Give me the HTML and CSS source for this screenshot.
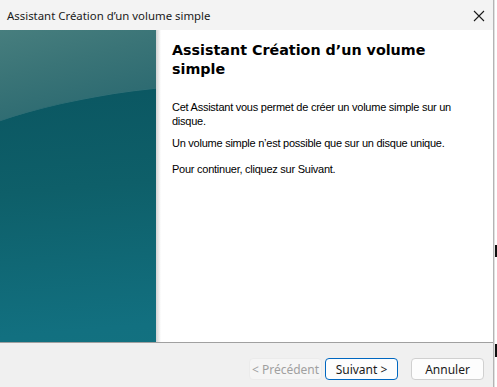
FILE: index.html
```html
<!DOCTYPE html>
<html>
  <head>
    <meta charset="utf-8" />
    <title>Assistant Création d'un volume simple</title>
    <link rel="stylesheet" href="styles.css">
  </head>
  <body>
    <div class="window">
      <div class="titlebar">
        <span class="title">Assistant Création d’un volume simple</span>
        <svg class="close" width="12" height="12" viewBox="0 0 12 12">
          <path d="M1 1 L11 11 M11 1 L1 11" stroke="#1a1a1a" stroke-width="1.1" fill="none" />
        </svg>
      </div>

      <div class="main">
        <div class="side"></div>
        <div class="shade"></div>
        <div class="content">
          <h1>Assistant Création d’un volume simple</h1>
          <p>Cet Assistant vous permet de créer un volume simple sur un disque.</p>
          <p>Un volume simple n’est possible que sur un disque unique.</p>
          <p class="next">Pour continuer, cliquez sur Suivant.</p>
        </div>
      </div>

      <div class="footer">
        <button class="btn disabled">&lt; Précédent</button>
        <button class="btn default">Suivant &gt;</button>
        <button class="btn cancel">Annuler</button>
      </div>
    </div>
    <div class="desk">
      <div class="mark one"></div>
      <div class="mark two"></div>
    </div>
  </body>
</html>
```

FILE: styles.css
```css
* {
  box-sizing: border-box;
  margin: 0;
  padding: 0;
}

body {
  display: flex;
  width: 497px;
  height: 387px;
  overflow: hidden;
  background: #fff;
  font-family: "Liberation Sans", Arial, sans-serif;
}

.window {
  width: 494px;
  height: 387px;
  display: flex;
  flex-direction: column;
  border-right: 1px solid #b4b4b4;
  background: #f0f0f0;
}

.titlebar {
  height: 30px;
  display: flex;
  align-items: center;
  justify-content: space-between;
  padding: 0 8px 0 7px;
  background: #f3f3f3;
}

.title {
  font-family: "Noto Sans", "Liberation Sans", sans-serif;
  font-size: 11.4px;
  color: #1a1a1a;
}

.close {
  margin-top: 1px;
}

.main {
  height: 313px;
  display: flex;
  border-bottom: 1px solid #a0a0a0;
  background: #fff;
}

.side {
  position: relative;
  width: 156px;
  overflow: hidden;
  background: linear-gradient(165deg, #477e7e 0%, #3a7477 14%, #2c6a71 30%, #1f6068 100%);
}

/* darker lower area with the curved top edge */
.side::before {
  content: "";
  position: absolute;
  left: -150px;
  top: 53px;
  width: 800px;
  height: 340px;
  border-radius: 50%;
  border-top: 1px solid #316f76;
  background: linear-gradient(175deg, #0a5560 0%, #0e5f69 30%, #127080 65%, #15767f 100%);
}

.shade {
  width: 5px;
  background: linear-gradient(90deg, #d2d2d2, #fff);
}

.content {
  flex: 1;
  padding: 11px 12px 0 11px;
  color: #000;
}

h1 {
  font-family: "DejaVu Sans", Verdana, sans-serif;
  font-size: 14.3px;
  line-height: 19px;
  font-weight: bold;
  margin-bottom: 21px;
  width: 290px;
}

p {
  font-size: 11px;
  line-height: 14px;
  letter-spacing: -0.25px;
  margin-bottom: 8px;
  width: 300px;
}

p.next {
  margin-top: 12px;
}

.footer {
  flex: 1;
  display: flex;
  justify-content: flex-end;
  align-items: flex-start;
  padding: 15px 9px 0 0;
}

.btn {
  width: 73px;
  height: 22px;
  border: 1px solid #d0d0d0;
  border-radius: 4px;
  background: #fdfdfd;
  font-family: "Noto Sans", "Liberation Sans", sans-serif;
  font-size: 12px;
  color: #1a1a1a;
}

.btn.disabled {
  background: #f5f5f5;
  border-color: #ebebeb;
  color: #a0a0a0;
}

.btn.default {
  margin-left: 3px;
  border-color: #0067c0;
}

.btn.cancel {
  margin-left: 13px;
}

.desk {
  flex: 1;
  position: relative;
  border-left: 1px solid #e0e0e0;
}

.mark {
  position: absolute;
  left: 0;
  right: 0;
  background: #111;
}

.mark.one {
  top: 245px;
  height: 12px;
}

.mark.two {
  top: 344px;
  height: 13px;
}
```
